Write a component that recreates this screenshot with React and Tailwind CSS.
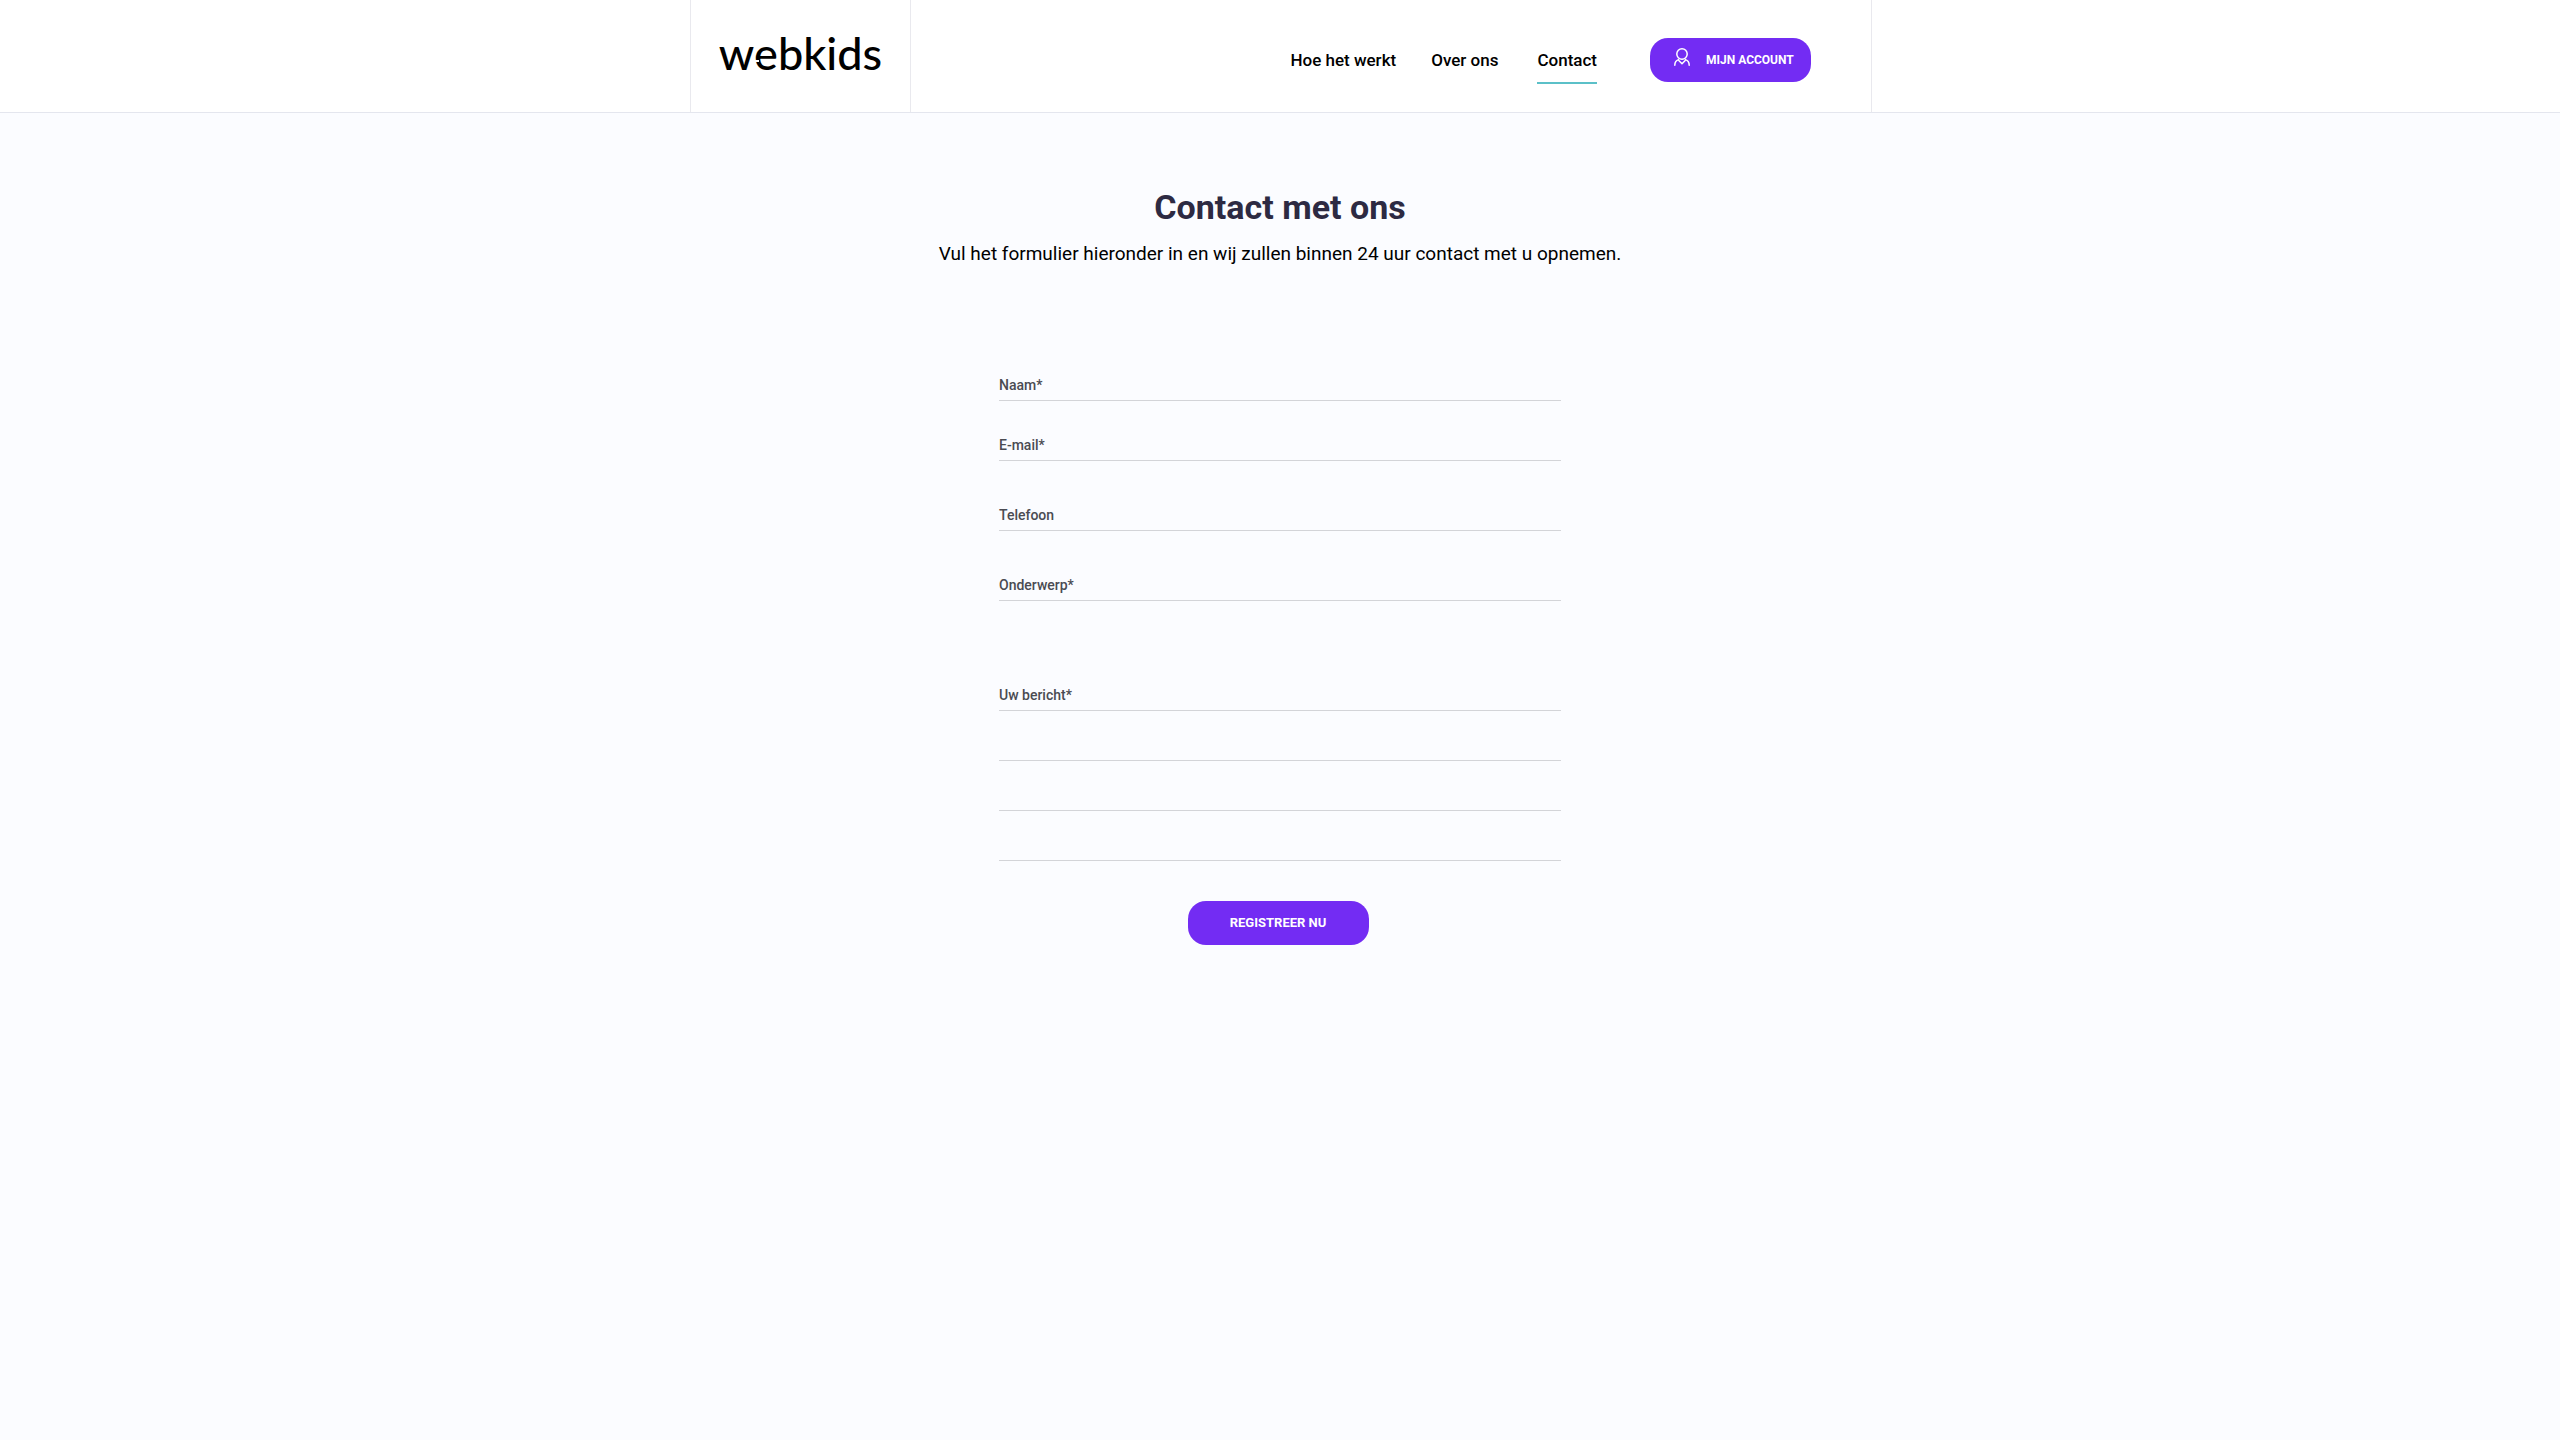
const navLinks = [
  { label: "Hoe het werkt", spacing: "" },
  { label: "Over ons", spacing: "ml-[35px]" },
  { label: "Contact", spacing: "ml-[39px]", active: true },
];

const fields = [
  { id: "naam", label: "Naam*", type: "text", height: "h-10", required: true },
  { id: "email", label: "E-mail*", type: "email", height: "h-15", required: true },
  { id: "telefoon", label: "Telefoon", type: "tel", height: "h-[70px]" },
  { id: "onderwerp", label: "Onderwerp*", type: "text", height: "h-[70px]", required: true },
];

function UserIcon() {
  return (
    <svg
      className="h-[18px] w-4 shrink-0"
      viewBox="0 0 16 18"
      fill="none"
      stroke="currentColor"
      strokeWidth="1.5"
      strokeLinecap="round"
      strokeLinejoin="round"
      aria-hidden="true"
    >
      <circle cx="8" cy="6" r="5.2" />
      <path d="M0.8 17.2c0-2.800 1.300-4.800 3.700-5.600M15.200 17.200c0-2.800-1.300-4.800-3.700-5.600" />
      <path d="M4.800 12.500L8 15.800l3.200-3.300" />
    </svg>
  );
}

function Logo() {
  return (
    <span className="relative font-['Lato',sans-serif] text-[45px] leading-[54px] font-medium text-black">
      webkids
      <span className="absolute top-[34px] left-[32px] h-0.5 w-2 bg-white" aria-hidden="true" />
    </span>
  );
}

function Header() {
  return (
    <header className="border-b border-[#e4e6ee] bg-white pl-0.5">
      <div className="mx-auto flex h-28 max-w-[1182px] border-x border-[#e9e9ee]">
        <a
          href="#"
          className="flex w-[220px] shrink-0 items-center justify-center border-r border-[#e9e9ee] pb-1.5"
        >
          <Logo />
        </a>
        <div className="flex flex-1 items-center justify-end pt-2 pr-[60px]">
          <nav className="flex items-center text-[17px] leading-6 font-medium text-black">
            {navLinks.map((link) => (
              <a
                key={link.label}
                href="#"
                aria-current={link.active ? "page" : undefined}
                className={
                  link.spacing +
                  (link.active
                    ? " border-y-2 border-t-transparent border-b-[#5bc0c8] py-2.5"
                    : " py-3")
                }
              >
                {link.label}
              </a>
            ))}
          </nav>
          <button
            type="button"
            className="ml-[53px] flex h-11 w-[161px] items-center rounded-[18px] bg-[#732cf3] pl-6 text-xs font-bold text-white"
          >
            <span className="pb-1.5">
              <UserIcon />
            </span>
            <span className="ml-4">MIJN ACCOUNT</span>
          </button>
        </div>
      </div>
    </header>
  );
}

export default function App() {
  return (
    <div className="min-h-screen bg-[#fbfcff] font-['Roboto',sans-serif]">
      <Header />
      <main className="flex flex-col items-center px-6 pt-[70px]">
        <h1 className="text-[34px] leading-12 font-bold text-[#2d2a42]">Contact met ons</h1>
        <p className="text-[19px] leading-[46px] text-black">
          Vul het formulier hieronder in en wij zullen binnen 24 uur contact met u opnemen.
        </p>
        <form
          className="mt-[84px] flex w-full max-w-[562px] flex-col text-sm font-medium text-[#4a4b52]"
          onSubmit={(event) => event.preventDefault()}
        >
          {fields.map((field) => (
            <div
              key={field.id}
              className={"flex items-end gap-3 border-b border-[#d3d4d8] pb-[5px] " + field.height}
            >
              <label htmlFor={field.id}>{field.label}</label>
              <input
                id={field.id}
                name={field.id}
                type={field.type}
                required={field.required}
                className="min-w-0 flex-1 bg-transparent outline-none"
              />
            </div>
          ))}
          <label
            htmlFor="bericht"
            className="flex h-[110px] items-end border-b border-[#d3d4d8] pb-[5px]"
          >
            Uw bericht*
          </label>
          <textarea
            id="bericht"
            name="bericht"
            required
            className="h-[150px] resize-none bg-[repeating-linear-gradient(to_bottom,transparent_0px,transparent_49px,#d3d4d8_49px,#d3d4d8_50px)] leading-[50px] outline-none"
          />
          <button
            type="submit"
            className="mt-10 mr-1 h-11 w-[181px] self-center rounded-[18px] bg-[#732cf3] text-[13px] font-bold text-white"
          >
            REGISTREER NU
          </button>
        </form>
      </main>
    </div>
  );
}
